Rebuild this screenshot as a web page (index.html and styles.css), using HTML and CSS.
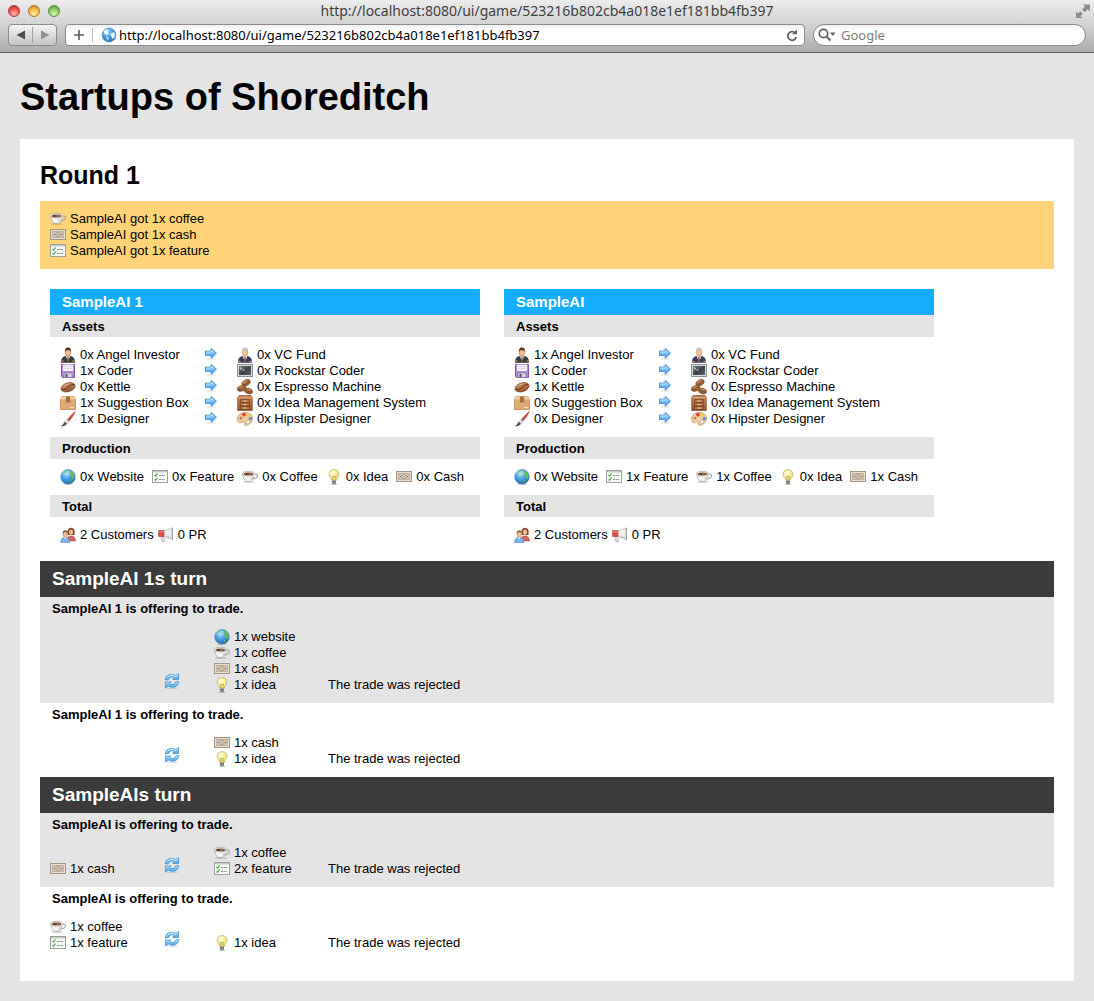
FILE: index.html
```html
<!DOCTYPE html>
<html lang="en">
<head>
<meta charset="utf-8">
<meta name="viewport" content="width=device-width, initial-scale=1">
<title>Startups of Shoreditch</title>
<link rel="stylesheet" href="styles.css">
</head>
<body>
<svg class="sprite" aria-hidden="true">
  <defs>
    <linearGradient id="g-blue" x1="0" y1="0" x2="0" y2="1"><stop offset="0" stop-color="#b5e2fc"/><stop offset="1" stop-color="#3a9be6"/></linearGradient>
    <radialGradient id="g-globe" cx=".4" cy=".3" r=".7"><stop offset="0" stop-color="#9fd8f8"/><stop offset=".5" stop-color="#4aa2e4"/><stop offset="1" stop-color="#2468b4"/></radialGradient>
    <linearGradient id="g-wood" x1="0" y1="0" x2="0" y2="1"><stop offset="0" stop-color="#c98c60"/><stop offset="1" stop-color="#94552e"/></linearGradient>
    <radialGradient id="g-bulb" cx=".4" cy=".3" r=".7"><stop offset="0" stop-color="#fffde0"/><stop offset="1" stop-color="#ecdc6c"/></radialGradient>
    <linearGradient id="g-term" x1="0" y1="0" x2="1" y2="1"><stop offset="0" stop-color="#7a8187"/><stop offset=".5" stop-color="#3c4248"/><stop offset="1" stop-color="#5b6167"/></linearGradient>
  </defs>
  <symbol id="coffee" viewBox="0 0 16 16">
    <ellipse cx="7" cy="13" rx="6" ry="1" fill="#000" opacity=".15"/>
    <path d="M12 5h1.500q2 0 2 1.700q0 2.500-4.500 3.200" fill="none" stroke="#a8a8a8" stroke-width="1.200"/>
    <path d="M.6 4.500q.4 6 3.400 8h5q3-2 3.400-8z" fill="#f3f3f3" stroke="#a3a3a3" stroke-width=".7"/>
    <path d="M9 8h2q-.6 3-2.600 4z" fill="#cfcfcf"/>
    <ellipse cx="6.500" cy="4.600" rx="6" ry="2.300" fill="#fff" stroke="#9b9b9b" stroke-width=".7"/>
    <ellipse cx="6.500" cy="4.900" rx="4.600" ry="1.400" fill="#6d452a"/>
    <path d="M6 4.500h4q-1 1.500-3 1z" fill="#c48a58"/>
  </symbol>
  <symbol id="cash" viewBox="0 0 16 16">
    <rect x=".5" y="2.500" width="15" height="10" fill="#e8ddcf" stroke="#a39686"/>
    <rect x="2.500" y="4.500" width="11" height="6" fill="#d0c2b0" stroke="#b8a997" stroke-width=".8"/>
    <ellipse cx="8" cy="7.500" rx="2" ry="2.400" fill="#f0e7da" stroke="#9b8d7b" stroke-width=".8"/>
    <path d="M8 6.500v2M4.500 7v1M11.500 7v1" stroke="#7d6e5d"/>
  </symbol>
  <symbol id="feature" viewBox="0 0 16 16">
    <rect x=".5" y="1.500" width="15" height="12" fill="#f8f9f8" stroke="#9aa09b"/>
    <path d="M1 2.700h14" stroke="#c4cac5" stroke-width="1.400"/>
    <path d="M2.500 6.200l1 1L5.500 4.500M2.500 10.300l1 1L5.500 8.500" fill="none" stroke="#40a838" stroke-width="1.200"/>
    <path d="M7 6.500h6M7 10.500h6" stroke="#8b948d" stroke-dasharray="2 .5"/>
  </symbol>
  <symbol id="investor" viewBox="0 0 16 16">
    <path d="M1.300 15.500q0-5.500 3.700-6h6q3.700.5 3.700 6z" fill="#3e3a3a" stroke="#272424" stroke-width=".5"/>
    <path d="M6 9.300l2 5.500 2-5.500z" fill="#fff"/><path d="M7.500 10h1l.4 3.500-.9 1-.9-1z" fill="#555"/>
    <path d="M1.500 14h2M12.500 14h2" stroke="#e0a070"/>
    <ellipse cx="8" cy="5.500" rx="2.800" ry="3.800" fill="#edbc8d" stroke="#9a693f" stroke-width=".5"/>
    <path d="M4.900 5.300Q4.500.6 8 .6t3.100 4.700l-.8-2H6z" fill="#54321e"/>
  </symbol>
  <symbol id="vc" viewBox="0 0 16 16">
    <path d="M1.300 15.500q0-5.500 3.700-6h6q3.700.5 3.700 6z" fill="#32405f" stroke="#222c45" stroke-width=".5"/>
    <path d="M5.700 9.300l2.300 6 2.300-6z" fill="#fff"/><path d="M7.400 10h1.200l.4 4-1 1.500-1-1.500z" fill="#b72f28"/>
    <path d="M1.500 14.500h2M12.500 14.500h2" stroke="#e0a070"/>
    <ellipse cx="8" cy="5.500" rx="2.800" ry="3.800" fill="#f0c297" stroke="#a67c55" stroke-width=".5"/>
    <path d="M4.900 5.500Q4.500.6 8 .6t3.100 4.900l-.8-2.300H6z" fill="#bfc3c4"/>
  </symbol>
  <symbol id="floppy" viewBox="0 0 16 16">
    <path d="M1.500 1.500h13v13h-12l-1-1z" fill="#b389d8" stroke="#8459b4"/>
    <path d="M3 1.500h10v6.500H3z" fill="#f5f1fa"/><path d="M4 3.500h8M4 5.500h8" stroke="#e0d6ea"/>
    <path d="M4 10h8v4.500H4z" fill="#d8d5df" stroke="#77688c" stroke-width=".6"/><path d="M5.500 11h2v3h-2z" fill="#614485"/>
  </symbol>
  <symbol id="terminal" viewBox="0 0 16 16">
    <rect x=".5" y="1.500" width="15" height="12" fill="#d9dadb" stroke="#8f9193"/>
    <rect x="2" y="3" width="12" height="9" fill="url(#g-term)"/>
    <path d="M3 4.500l1.500 1L3 6.500M5.500 7h2" fill="none" stroke="#fff" stroke-width=".8"/>
  </symbol>
  <symbol id="bean" viewBox="0 0 16 16">
    <ellipse cx="8" cy="8.300" rx="7.300" ry="4.400" transform="rotate(-18 8 8)" fill="url(#g-wood)" stroke="#784424" stroke-width=".6"/>
    <path d="M1.700 10.500C5 11.200 6.400 9.700 8 8.300S11 5.500 14.400 5.500" fill="none" stroke="#643617" stroke-width="1"/>
    <path d="M3.500 7.700q2-2.200 5-2.800" fill="none" stroke="#e5bd9b" stroke-width=".9"/>
  </symbol>
  <symbol id="beans" viewBox="0 0 16 16">
    <g fill="url(#g-wood)" stroke="#784424" stroke-width=".6">
      <ellipse cx="9" cy="3.800" rx="4.500" ry="2.900" transform="rotate(-28 9 3.800)"/>
      <ellipse cx="4.600" cy="9.400" rx="4.500" ry="2.800" transform="rotate(-15 4.600 9.400)"/>
      <ellipse cx="11.500" cy="12" rx="4.200" ry="2.800" transform="rotate(18 11.500 12)"/>
    </g>
    <path d="M5.700 6q3 .2 4-2t3.200-2.300M.6 10.500q3 .5 4-1t4-1.300M8 11q2 0 3 1.200t4 .8" fill="none" stroke="#643617" stroke-width=".7"/>
  </symbol>
  <symbol id="box" viewBox="0 0 16 16">
    <path d="M2 1.500h12l1.500 3v10H.5v-10z" fill="#dfab74" stroke="#bd8650" stroke-width=".8"/>
    <path d="M2 1.500h12l1.500 3H.5z" fill="#f1cc9d"/>
    <path d="M6 1.500h4l.4 6.500-1-1-1 1-1-1-1.500 1z" fill="#a47244"/>
    <path d="M10 12.500h4" stroke="#f8e0bc"/>
  </symbol>
  <symbol id="cabinet" viewBox="0 0 16 16">
    <path d="M2 .6h12l1.300 2v12.800H.7V2.600z" fill="url(#g-wood)" stroke="#7c4523" stroke-width=".7"/>
    <path d="M1 2.700h14" stroke="#dca676"/>
    <path d="M3.500 4.500h9v3h-9zM3.500 8h9v3h-9zM3.500 11.500h9v3h-9z" fill="#b4754a" stroke="#6d3a1b" stroke-width=".6"/>
    <path d="M6.500 6h3M6.500 9.500h3M6.500 13h3" stroke="#f0c999"/>
  </symbol>
  <symbol id="brush" viewBox="0 0 16 16">
    <path d="M15.500.3Q11 4 7 9l1.600 1.500Q13 6 15.500.3z" fill="#d8493a" stroke="#a32d22" stroke-width=".5"/>
    <path d="M7 8.600l2 1.900-2 2.400-2.300-2.200z" fill="#e4e4e4" stroke="#999" stroke-width=".5"/>
    <path d="M4.700 10.700L7 12.900Q4.800 15.600.5 15.600 3 14 4.700 10.700z" fill="#594a48"/>
  </symbol>
  <symbol id="palette" viewBox="0 0 16 16">
    <path d="M8 1.500c5 0 7.700 2.700 7.500 6.300-.2 3.200-3 5.700-6 6.500-2 .4-2.300-1-1.700-2.200S5.500 10.500 4 11.500.5 11 .5 8.500C.5 4 4 1.500 8 1.500z" fill="#f0cda4" stroke="#c0905d" stroke-width=".8"/>
    <circle cx="4" cy="7" r="1.500" fill="#b98253"/><circle cx="7" cy="3.600" r="1.900" fill="#df4336"/><circle cx="11.500" cy="4.300" r="1.800" fill="#f1cf3d"/>
    <circle cx="13.300" cy="7.600" r="1.700" fill="#4b8de0"/><circle cx="11" cy="11" r="1.700" fill="#fff" stroke="#c39866" stroke-width=".6"/>
  </symbol>
  <symbol id="globe" viewBox="0 0 16 16">
    <ellipse cx="8" cy="15" rx="5" ry=".9" fill="#000" opacity=".2"/>
    <circle cx="8" cy="7.800" r="7.300" fill="url(#g-globe)" stroke="#3a78bb" stroke-width=".5"/>
    <path d="M2.500 4Q4 1.700 6.500 1.200L7 2.500 5 3.500 4.200 5zM9 3l2.500-1.200q2.800 1.800 3.200 5L14 10l-1.500.5-.7-2.500-2-1 1-2zM9.500 10.500l2 .5-1 2.500z" fill="#5fbd5c"/>
    <ellipse cx="6.500" cy="4" rx="4" ry="2.400" fill="#fff" opacity=".22"/>
  </symbol>
  <symbol id="idea" viewBox="0 0 16 16">
    <ellipse cx="8" cy="15.200" rx="4" ry=".7" fill="#000" opacity=".18"/>
    <path d="M8 .6c3 0 4.900 2 4.900 4.700 0 2.500-2.400 3.600-2.700 6.200H5.800C5.500 8.900 3.100 7.800 3.100 5.300 3.100 2.600 5 .6 8 .6z" fill="url(#g-bulb)" stroke="#b9ac5a" stroke-width=".7"/>
    <path d="M6.800 11V7L8 8l1.200-1v4" fill="none" stroke="#b99a39" stroke-width=".7"/>
    <path d="M6 11.500h4v3L8.500 15.500h-1L6 14.500z" fill="#9a9d9d"/><path d="M6 12.500h4M6 14h4" stroke="#5e6363" stroke-width=".6"/>
  </symbol>
  <symbol id="people" viewBox="0 0 16 16">
    <path d="M6.500 14q0-4 3-5h3q3 1 3 5z" fill="#cf6459" stroke="#a0443b" stroke-width=".5"/>
    <path d="M7.500 8Q6.500 1 11 .8T14.500 8z" fill="#8a4b2b"/><ellipse cx="11" cy="5.200" rx="2" ry="2.700" fill="#f1c297"/>
    <path d="M.5 15.500q0-4 3-5h3.500q3 1 3 5z" fill="#7cb0e6" stroke="#4a7eb8" stroke-width=".5"/>
    <path d="M4 10.300l1.300 2 1.400-2z" fill="#fff"/>
    <ellipse cx="5.300" cy="7.300" rx="2.300" ry="3" fill="#eebb8b" stroke="#a1744c" stroke-width=".4"/>
    <path d="M2.700 7.200Q2.400 3.300 5.300 3.300T7.900 7.200L7 5.300H4z" fill="#8e5b35"/>
  </symbol>
  <symbol id="horn" viewBox="0 0 16 16">
    <path d="M2.700 9.500h3l.8 5.200H4z" fill="#dedede" stroke="#a2a2a2" stroke-width=".6"/>
    <path d="M5.500 4L14 1v11.500L5.500 9.500z" fill="#efefef" stroke="#acacac" stroke-width=".6"/>
    <path d="M6 8.500l7.500 1.500v1.700L6 9.300z" fill="#c9c9c9"/>
    <path d="M.6 3.500h5.400v6H.6z" fill="#e14c44" stroke="#b23630" stroke-width=".6"/><path d="M1 4.800h4.700" stroke="#f48f87"/>
    <path d="M14.500.7v12.300" stroke="#a0a0a0"/>
  </symbol>
  <symbol id="arrow" viewBox="0 0 16 16">
    <path d="M4 12h8" stroke="#000" stroke-width="1.400" opacity=".1"/>
    <path d="M2.500 4h5.700V1.300L13.500 6.300l-5.300 5V8.600H2.500z" fill="url(#g-blue)" stroke="#3f8cca" stroke-width=".9"/>
    <path d="M3.300 5h5.600V3.700" fill="none" stroke="#d8f1ff" stroke-width=".8"/>
  </symbol>
  <symbol id="sync" viewBox="0 0 16 16">
    <ellipse cx="8" cy="15.200" rx="6" ry=".7" fill="#000" opacity=".12"/>
    <g fill="url(#g-blue)" stroke="#3a8fd2" stroke-width=".7">
      <path d="M1.200 6.800C1.600 3.300 4 1.200 7.300 1.200q2.400 0 4 1.300L14.600.6V6.500H8.800l1.500-1.900Q9.200 3.700 7.600 3.900 5.200 4.200 4.200 6.800z"/>
      <path d="M14.800 8.700c-.4 3.500-2.800 5.600-6.100 5.600q-2.400 0-4-1.300L1.400 14.900V9h5.800l-1.500 1.900q1.100.9 2.700.7 2.400-.3 3.400-2.900z"/>
    </g>
    <path d="M2.500 6Q4 2.300 7.500 2.200 9.500 2.200 11 3.500L13.700 2" fill="none" stroke="#dcf2ff" stroke-width=".7"/>
  </symbol>
  <symbol id="site" viewBox="0 0 16 16">
    <circle cx="8" cy="8" r="7" fill="url(#g-globe)" stroke="#5a8dc6" stroke-width=".6"/>
    <path d="M2.500 4L6 2l1.500 1.500-1 1.500 1 1.500-2 1.500L3.500 7zM9.500 7l3-2 1.700 2-1 4-1.700 1-1-2.500zM5 9.500l2.500 1.500L7 14z" fill="#e9f4fd"/>
  </symbol>
</svg>

<header class="browser">
  <div class="titlebar">
    <div class="lights">
      <button class="light light-red" aria-label="Close"></button>
      <button class="light light-amber" aria-label="Minimise"></button>
      <button class="light light-green" aria-label="Zoom"></button>
    </div>
    <div class="window-title">http://localhost:8080/ui/game/523216b802cb4a018e1ef181bb4fb397</div>
    <button class="expand" aria-label="Full screen"><svg viewBox="0 0 16 16" width="16" height="16"><path d="M8 1.500h7v7l-2.300-2.300-3 3L7 6.600l3-3zM1 8.500L3 10.500l2.300-2.300 2.500 2.500L5.500 13l2 2H1z" fill="#8d8d8d"/></svg></button>
  </div>
  <div class="toolbar">
    <div class="history">
      <button class="history-button" aria-label="Back"><svg viewBox="0 0 10 10" width="10" height="10"><path d="M9 .5v9L.5 5z" fill="#4d4d4d"/></svg></button>
      <button class="history-button" aria-label="Forward"><svg viewBox="0 0 10 10" width="10" height="10"><path d="M1 .5v9L9.500 5z" fill="#929292"/></svg></button>
    </div>
    <div class="address">
      <button class="add" aria-label="Add bookmark"><svg viewBox="0 0 10 10" width="10" height="10"><path d="M5 0v10M0 5h10" stroke="#5d5d5d" stroke-width="1.600"/></svg></button>
      <svg class="icon"><use href="#site"/></svg>
      <input class="field" type="text" aria-label="Address" value="http://localhost:8080/ui/game/523216b802cb4a018e1ef181bb4fb397">
      <button class="reload" aria-label="Reload"><svg viewBox="0 0 12 13" width="12" height="13"><path d="M9.500 4.300A4.300 4.300 0 1 0 10.300 8" fill="none" stroke="#606060" stroke-width="1.800"/><path d="M6 5.300h5V.5z" fill="#606060"/></svg></button>
    </div>
    <div class="search">
      <svg viewBox="0 0 18 14" width="18" height="14"><circle cx="5.500" cy="5.500" r="4.200" fill="none" stroke="#646464" stroke-width="1.800"/><path d="M8.500 8.500l4 4" stroke="#646464" stroke-width="2.200"/><path d="M12 4.500h5.500L14.800 8z" fill="#646464"/></svg>
      <input class="field" type="text" aria-label="Search" placeholder="Google">
    </div>
  </div>
</header>

<main class="page">
  <h1>Startups of Shoreditch</h1>
  <section class="panel">
    <h2>Round 1</h2>
    <ul class="log">
      <li class="item"><svg class="icon"><use href="#coffee"/></svg>SampleAI got 1x coffee</li>
      <li class="item"><svg class="icon"><use href="#cash"/></svg>SampleAI got 1x cash</li>
      <li class="item"><svg class="icon"><use href="#feature"/></svg>SampleAI got 1x feature</li>
    </ul>

    <div class="players">
      <section class="player">
        <h3 class="player-name">SampleAI 1</h3>
        <h4 class="bar">Assets</h4>
        <div class="assets">
          <span class="item"><svg class="icon"><use href="#investor"/></svg>0x Angel Investor</span><svg class="icon"><use href="#arrow"/></svg><span class="item"><svg class="icon"><use href="#vc"/></svg>0x VC Fund</span>
          <span class="item"><svg class="icon"><use href="#floppy"/></svg>1x Coder</span><svg class="icon"><use href="#arrow"/></svg><span class="item"><svg class="icon"><use href="#terminal"/></svg>0x Rockstar Coder</span>
          <span class="item"><svg class="icon"><use href="#bean"/></svg>0x Kettle</span><svg class="icon"><use href="#arrow"/></svg><span class="item"><svg class="icon"><use href="#beans"/></svg>0x Espresso Machine</span>
          <span class="item"><svg class="icon"><use href="#box"/></svg>1x Suggestion Box</span><svg class="icon"><use href="#arrow"/></svg><span class="item"><svg class="icon"><use href="#cabinet"/></svg>0x Idea Management System</span>
          <span class="item"><svg class="icon"><use href="#brush"/></svg>1x Designer</span><svg class="icon"><use href="#arrow"/></svg><span class="item"><svg class="icon"><use href="#palette"/></svg>0x Hipster Designer</span>
        </div>
        <h4 class="bar">Production</h4>
        <div class="production">
          <span class="item"><svg class="icon"><use href="#globe"/></svg>0x Website</span>
          <span class="item"><svg class="icon"><use href="#feature"/></svg>0x Feature</span>
          <span class="item"><svg class="icon"><use href="#coffee"/></svg>0x Coffee</span>
          <span class="item"><svg class="icon"><use href="#idea"/></svg>0x Idea</span>
          <span class="item"><svg class="icon"><use href="#cash"/></svg>0x Cash</span>
        </div>
        <h4 class="bar">Total</h4>
        <div class="total">
          <span class="item"><svg class="icon"><use href="#people"/></svg>2 Customers</span>
          <span class="item"><svg class="icon"><use href="#horn"/></svg>0 PR</span>
        </div>
      </section>

      <section class="player">
        <h3 class="player-name">SampleAI</h3>
        <h4 class="bar">Assets</h4>
        <div class="assets">
          <span class="item"><svg class="icon"><use href="#investor"/></svg>1x Angel Investor</span><svg class="icon"><use href="#arrow"/></svg><span class="item"><svg class="icon"><use href="#vc"/></svg>0x VC Fund</span>
          <span class="item"><svg class="icon"><use href="#floppy"/></svg>1x Coder</span><svg class="icon"><use href="#arrow"/></svg><span class="item"><svg class="icon"><use href="#terminal"/></svg>0x Rockstar Coder</span>
          <span class="item"><svg class="icon"><use href="#bean"/></svg>1x Kettle</span><svg class="icon"><use href="#arrow"/></svg><span class="item"><svg class="icon"><use href="#beans"/></svg>0x Espresso Machine</span>
          <span class="item"><svg class="icon"><use href="#box"/></svg>0x Suggestion Box</span><svg class="icon"><use href="#arrow"/></svg><span class="item"><svg class="icon"><use href="#cabinet"/></svg>0x Idea Management System</span>
          <span class="item"><svg class="icon"><use href="#brush"/></svg>0x Designer</span><svg class="icon"><use href="#arrow"/></svg><span class="item"><svg class="icon"><use href="#palette"/></svg>0x Hipster Designer</span>
        </div>
        <h4 class="bar">Production</h4>
        <div class="production">
          <span class="item"><svg class="icon"><use href="#globe"/></svg>0x Website</span>
          <span class="item"><svg class="icon"><use href="#feature"/></svg>1x Feature</span>
          <span class="item"><svg class="icon"><use href="#coffee"/></svg>1x Coffee</span>
          <span class="item"><svg class="icon"><use href="#idea"/></svg>0x Idea</span>
          <span class="item"><svg class="icon"><use href="#cash"/></svg>1x Cash</span>
        </div>
        <h4 class="bar">Total</h4>
        <div class="total">
          <span class="item"><svg class="icon"><use href="#people"/></svg>2 Customers</span>
          <span class="item"><svg class="icon"><use href="#horn"/></svg>0 PR</span>
        </div>
      </section>
    </div>

    <section class="turn">
      <h3 class="turn-name">SampleAI 1s turn</h3>
      <article class="trade">
        <h4 class="trade-title">SampleAI 1 is offering to trade.</h4>
        <div class="trade-row">
          <ul></ul>
          <svg class="icon sync"><use href="#sync"/></svg>
          <ul>
            <li class="item"><svg class="icon"><use href="#globe"/></svg>1x website</li>
            <li class="item"><svg class="icon"><use href="#coffee"/></svg>1x coffee</li>
            <li class="item"><svg class="icon"><use href="#cash"/></svg>1x cash</li>
            <li class="item"><svg class="icon"><use href="#idea"/></svg>1x idea</li>
          </ul>
          <p>The trade was rejected</p>
        </div>
      </article>
      <article class="trade">
        <h4 class="trade-title">SampleAI 1 is offering to trade.</h4>
        <div class="trade-row">
          <ul></ul>
          <svg class="icon sync"><use href="#sync"/></svg>
          <ul>
            <li class="item"><svg class="icon"><use href="#cash"/></svg>1x cash</li>
            <li class="item"><svg class="icon"><use href="#idea"/></svg>1x idea</li>
          </ul>
          <p>The trade was rejected</p>
        </div>
      </article>
    </section>

    <section class="turn">
      <h3 class="turn-name">SampleAIs turn</h3>
      <article class="trade">
        <h4 class="trade-title">SampleAI is offering to trade.</h4>
        <div class="trade-row">
          <ul>
            <li class="item"><svg class="icon"><use href="#cash"/></svg>1x cash</li>
          </ul>
          <svg class="icon sync"><use href="#sync"/></svg>
          <ul>
            <li class="item"><svg class="icon"><use href="#coffee"/></svg>1x coffee</li>
            <li class="item"><svg class="icon"><use href="#feature"/></svg>2x feature</li>
          </ul>
          <p>The trade was rejected</p>
        </div>
      </article>
      <article class="trade">
        <h4 class="trade-title">SampleAI is offering to trade.</h4>
        <div class="trade-row">
          <ul>
            <li class="item"><svg class="icon"><use href="#coffee"/></svg>1x coffee</li>
            <li class="item"><svg class="icon"><use href="#feature"/></svg>1x feature</li>
          </ul>
          <svg class="icon sync"><use href="#sync"/></svg>
          <ul>
            <li class="item"><svg class="icon"><use href="#idea"/></svg>1x idea</li>
          </ul>
          <p>The trade was rejected</p>
        </div>
      </article>
    </section>
  </section>
</main>
</body>
</html>
```
FILE: styles.css
```css
* {
  box-sizing: border-box;
}

body {
  margin: 0;
  background: #e4e4e4;
  color: #000;
  font: 13px/16px "Liberation Sans", Arial, sans-serif;
}

h1, h2, h3, h4, ul, p {
  margin: 0;
  padding: 0;
}

ul {
  list-style: none;
}

button {
  display: flex;
  align-items: center;
  justify-content: center;
  padding: 0;
  border: 0;
  background: none;
}

.sprite {
  display: block;
  width: 0;
  height: 0;
}

.icon {
  display: block;
  flex: none;
  width: 16px;
  height: 16px;
}

/* Browser window frame */

.browser {
  background: linear-gradient(#ececec, #d2d2d2 48%, #acacac);
  border-bottom: 1px solid #626262;
  font-family: "Noto Sans", "Open Sans", sans-serif;
}

.titlebar {
  display: grid;
  grid-template-columns: 80px 1fr 80px;
  align-items: start;
  height: 24px;
}

.lights {
  display: flex;
  gap: 8px;
  padding: 5px 0 0 8px;
}

.light {
  width: 12px;
  height: 12px;
  border: 1px solid #777;
  border-radius: 50%;
}

.light-red {
  background: radial-gradient(circle at 50% 80%, #ffb3a8, #ee4b47 60%, #b52a2a);
  border-color: #a43f3d;
}

.light-amber {
  background: radial-gradient(circle at 50% 80%, #fff0a0, #f2b03c 60%, #c17d1f);
  border-color: #a9762f;
}

.light-green {
  background: radial-gradient(circle at 50% 80%, #dcf7a8, #82c459 60%, #4f8e33);
  border-color: #5b8845;
}

.window-title {
  color: #404040;
  font-size: 14px;
  line-height: 22px;
  text-align: center;
  white-space: nowrap;
}

.expand {
  justify-self: end;
  margin: 3px 3px 0 0;
}

.toolbar {
  display: flex;
  gap: 8px;
  padding: 0 8px 6px;
}

.history,
.address,
.search {
  display: flex;
  align-items: center;
  height: 22px;
  border: 1px solid #8b8b8b;
  border-radius: 4px;
}

.history {
  width: 49px;
  background: linear-gradient(#f4f4f4, #c4c4c4);
}

.history-button {
  flex: 1;
  height: 16px;
}

.history-button + .history-button {
  border-left: 1px solid #a2a2a2;
}

.address,
.search {
  background: linear-gradient(#f0f0f0, #fff 30%);
}

.address {
  flex: 1;
  padding-right: 6px;
}

.add {
  width: 27px;
  height: 14px;
  margin-right: 8px;
  border-right: 1px solid #bdbdbd;
}

.field {
  flex: 1;
  min-width: 0;
  height: 20px;
  padding: 0 2px;
  border: 0;
  outline: 0;
  background: none;
  color: #000;
  font: inherit;
  font-size: 13px;
}

.field::placeholder {
  color: #7d7d7d;
  opacity: 1;
}

.search {
  flex: 0 1 273px;
  gap: 3px;
  padding: 0 4px;
  border-radius: 11px;
}

/* Game page */

.page {
  padding: 20px;
}

h1 {
  margin-bottom: 18px;
  font-size: 38px;
  line-height: 48px;
}

.panel {
  padding: 20px;
  background: #fff;
}

h2 {
  margin-bottom: 10px;
  font-size: 25px;
  line-height: 32px;
}

.item {
  display: flex;
  gap: 4px;
  white-space: nowrap;
}

.log {
  padding: 10px;
  background: #ffd479;
}

.players {
  display: flex;
  flex-wrap: wrap;
  gap: 24px;
  padding: 20px 10px 8px;
}

.player {
  width: 430px;
}

.player-name {
  padding: 0 12px;
  background: #14adff;
  color: #fff;
  font-size: 15px;
  line-height: 26px;
}

.bar,
.trade-title {
  padding: 4px 12px 2px;
  font-size: 13px;
  line-height: 16px;
}

.bar {
  background: #e4e4e4;
}

.assets,
.production,
.total {
  padding: 10px;
}

.assets {
  display: grid;
  grid-template-columns: 143px 34px 1fr;
}

.production {
  display: flex;
  gap: 8px;
}

.total {
  display: flex;
  gap: 4px;
}

.turn-name {
  padding: 0 12px;
  background: #3b3b3b;
  color: #fff;
  font-size: 19px;
  line-height: 36px;
}

.trade:nth-of-type(odd) {
  background: #e4e4e4;
}

.trade-row {
  display: grid;
  grid-template-columns: 114px 50px 114px 1fr;
  align-items: end;
  padding: 10px;
}

.sync {
  margin-bottom: 4px;
}
```
